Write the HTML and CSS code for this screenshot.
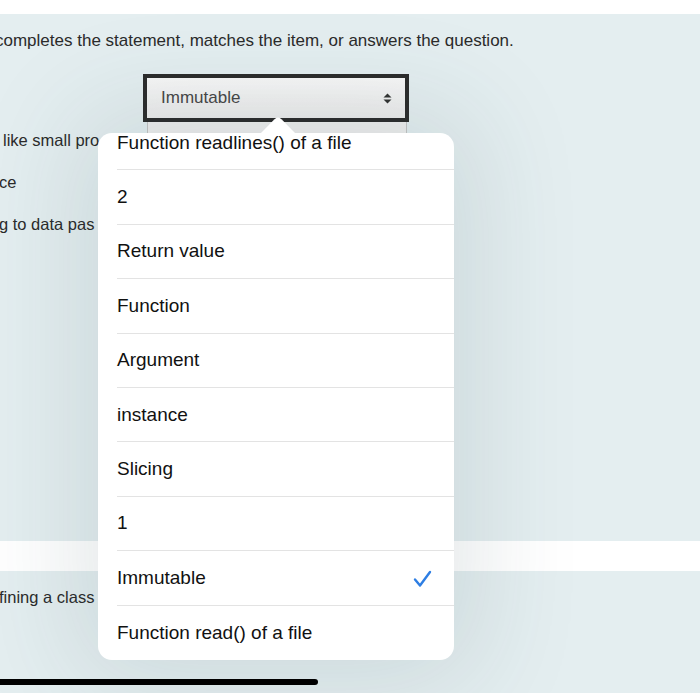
FILE: index.html
```html
<!DOCTYPE html>
<html lang="en">
<head>
  <meta charset="UTF-8">
  <meta name="viewport" content="width=device-width, initial-scale=1.0">
  <title>Quiz</title>
  <link rel="stylesheet" href="styles.css">
</head>
<body>
  <div class="screen">
    <div class="top-strip"></div>

    <div class="panel panel-first">
      <p class="instructions">completes the statement, matches the item, or answers the question.</p>
      <div class="question-area">
        <div class="labels">
          <div class="label">like small pro</div>
          <div class="label label-tight">ce</div>
          <div class="label label-tight">g to data pas</div>
        </div>
        <div class="selects">
          <div class="select active">
            <span>Immutable</span>
            <svg class="arrows" width="9" height="11" viewBox="0 0 9 11">
              <path d="M4.5 0.5 L8.5 4.5 L0.5 4.5 Z M4.5 10.5 L8.5 6.5 L0.5 6.5 Z" fill="#333"/>
            </svg>
          </div>
          <div class="select behind"></div>
        </div>
      </div>
    </div>

    <div class="gap"></div>

    <div class="panel panel-second">
      <div class="label label-class">fining a class</div>
    </div>

    <div class="popover">
      <svg class="popover-arrow" width="36" height="17" viewBox="0 0 36 17">
        <path d="M0 17 L14.5 2.2 Q18 -1 21.5 2.2 L36 17 Z" fill="#fff"/>
      </svg>
      <div class="options">
        <div class="option">Function readlines() of a file</div>
        <div class="option">2</div>
        <div class="option">Return value</div>
        <div class="option">Function</div>
        <div class="option">Argument</div>
        <div class="option">instance</div>
        <div class="option">Slicing</div>
        <div class="option">1</div>
        <div class="option selected">Immutable
          <svg class="check" width="19" height="18" viewBox="0 0 19 18">
            <path d="M2 9.5 L7 15.5 L17 2" fill="none" stroke="#2e7ee3" stroke-width="2.4" stroke-linecap="round" stroke-linejoin="round"/>
          </svg>
        </div>
        <div class="option">Function read() of a file</div>
      </div>
    </div>

    <div class="home-bar"></div>
  </div>
</body>
</html>
```

FILE: styles.css
```css
body {
  margin: 0;
  font-family: "Liberation Sans", Arial, sans-serif;
  color: #2b2b2b;
}
.screen {
  position: relative;
  width: 700px;
  height: 693px;
  overflow: hidden;
  background: #ffffff;
}
.top-strip {
  height: 14px;
  background: #ffffff;
}
.panel {
  background: #e4eef0;
}
.panel-first {
  height: 527px;
  padding-top: 17px;
  box-sizing: border-box;
}
.gap {
  height: 30px;
  background: #ffffff;
}
.panel-second {
  height: 122px;
  padding-top: 16px;
  box-sizing: border-box;
}
.instructions {
  margin: 0 0 0 -5px;
  font-size: 17px;
  line-height: 20px;
  white-space: nowrap;
}
.question-area {
  display: flex;
  margin-top: 23px;
}
.labels {
  width: 143px;
  padding-top: 56px;
}
.label {
  font-size: 16.5px;
  line-height: 20px;
  height: 42px;
  margin-left: 3px;
  white-space: nowrap;
}
.label-tight {
  margin-left: -1px;
}
.label-class {
  margin-left: -1px;
}
.select {
  box-sizing: border-box;
  width: 266px;
  height: 48px;
  display: flex;
  align-items: center;
  justify-content: space-between;
  padding: 0 13px 0 14px;
  font-size: 17px;
  color: #474747;
}
.select.active {
  border: 4px solid #2c2c2c;
  background: linear-gradient(#f7f7f7, #ececec);
}
.select.behind {
  width: 260px;
  height: 14px;
  margin-left: 4px;
  border: 1px solid #c4c4c4;
  border-top: none;
  background: #eeeeee;
}
.popover {
  position: absolute;
  left: 98px;
  top: 133px;
  width: 356px;
  height: 527px;
  background: #ffffff;
  border-radius: 14px;
  box-shadow: 0 0 110px 20px rgba(40, 70, 80, 0.13);
}
.popover-arrow {
  position: absolute;
  left: 162px;
  top: -16px;
}
.options {
  height: 100%;
  overflow: hidden;
  border-radius: 14px;
}
.options .option:first-child {
  margin-top: -17px;
}
.option {
  position: relative;
  height: 54.4px;
  display: flex;
  align-items: center;
  justify-content: space-between;
  margin-left: 19px;
  padding-right: 22px;
  font-size: 19px;
  color: #111;
  border-bottom: 1px solid #e3e3e3;
  box-sizing: border-box;
}
.option:last-child {
  border-bottom: none;
}
.check {
  margin-top: 2px;
}
.home-bar {
  position: absolute;
  left: -6px;
  top: 679px;
  width: 324px;
  height: 6px;
  border-radius: 3px;
  background: #000;
}
```
